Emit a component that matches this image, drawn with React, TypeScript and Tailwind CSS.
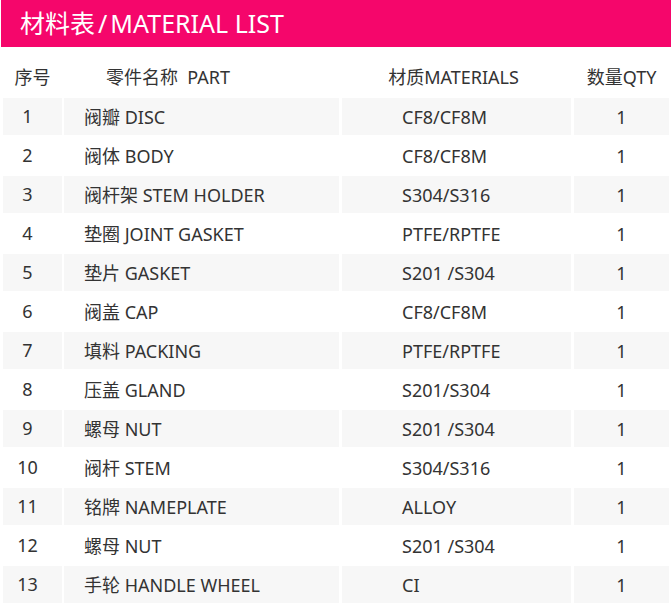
import React from "react";

const rows: [string, string, string, string][] = [
  ["1", "阀瓣 DISC", "CF8/CF8M", "1"],
  ["2", "阀体 BODY", "CF8/CF8M", "1"],
  ["3", "阀杆架 STEM HOLDER", "S304/S316", "1"],
  ["4", "垫圈 JOINT GASKET", "PTFE/RPTFE", "1"],
  ["5", "垫片 GASKET", "S201 /S304", "1"],
  ["6", "阀盖 CAP", "CF8/CF8M", "1"],
  ["7", "填料 PACKING", "PTFE/RPTFE", "1"],
  ["8", "压盖 GLAND", "S201/S304", "1"],
  ["9", "螺母 NUT", "S201 /S304", "1"],
  ["10", "阀杆 STEM", "S304/S316", "1"],
  ["11", "铭牌 NAMEPLATE", "ALLOY", "1"],
  ["12", "螺母 NUT", "S201 /S304", "1"],
  ["13", "手轮 HANDLE WHEEL", "CI", "1"],
];

export default function App() {
  return (
    <div
      className="w-[672px] h-[607px] bg-white overflow-hidden text-[#333333]"
      style={{ fontFamily: '"Noto Sans", "Noto Sans CJK SC", sans-serif' }}
    >
      <div className="ml-[1px] mr-[1px] h-[47px] bg-[#f5066b] flex items-center pl-[19px] text-white text-[25px] leading-none">
        <span>材料表</span>
        <span className="mx-[3px]">/</span>
        <span>MATERIAL LIST</span>
      </div>
      <div className="pt-[12px] px-[3px] flex flex-col gap-y-[2px]">
        <div className="flex h-[37px] items-center text-[18px]">
          <div className="w-[59px] text-center">序号</div>
          <div className="w-[275px] ml-[2px] pl-[42px]">零件名称&nbsp; PART</div>
          <div className="w-[229px] ml-[3px] text-center pr-[6px]">材质MATERIALS</div>
          <div className="w-[95px] ml-[3px] text-center">数量QTY</div>
        </div>
        {rows.map((r, i) => {
          const bg = i % 2 === 0 ? "bg-[#f7f7f7]" : "bg-white";
          return (
            <div key={i} className="flex h-[37px] text-[18px]">
              <div className={`w-[59px] ${bg} flex items-center justify-center pr-[10px]`}>{r[0]}</div>
              <div className={`w-[275px] ml-[2px] ${bg} flex items-center pl-[20px] pt-[1px]`}>{r[1]}</div>
              <div className={`w-[229px] ml-[3px] ${bg} flex items-center pl-[60px] pt-[1px]`}>{r[2]}</div>
              <div className={`w-[95px] ml-[3px] ${bg} flex items-center justify-center pt-[1px]`}>{r[3]}</div>
            </div>
          );
        })}
      </div>
    </div>
  );
}
